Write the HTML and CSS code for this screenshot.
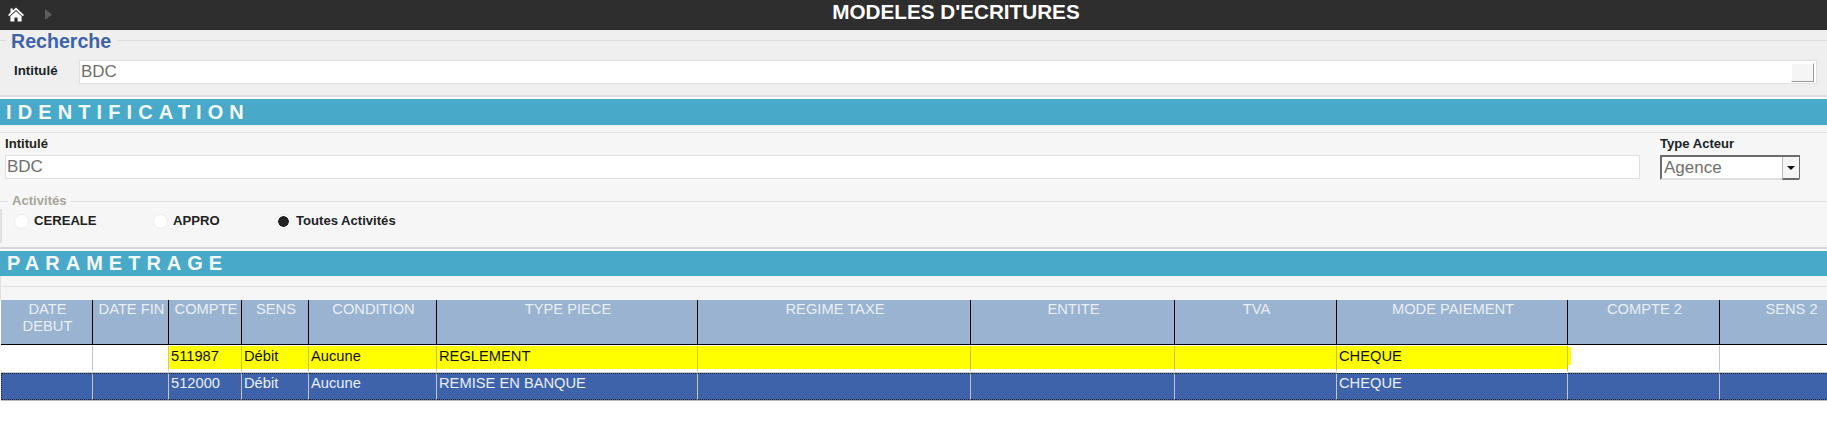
FILE: index.html
```html
<!DOCTYPE html>
<html lang="fr">
<head>
<meta charset="utf-8">
<title>Modeles d'ecritures</title>
<link rel="stylesheet" href="styles.css">
</head>
<body>
<header class="topbar">
  <div class="nav">
    <svg class="home" viewBox="0 0 16 15" width="16" height="15"><path d="M8 0.5 L16 8 L14.7 9.2 L8 3 L1.3 9.2 L0 8 L2.5 5.6 V1.5 H4.7 V3.6 Z" fill="#fff"/><path d="M8 4.2 L13.6 9.3 V14.5 H9.6 V10.5 H6.4 V14.5 H2.4 V9.3 Z" fill="#fff"/></svg>
    <svg class="arrow" viewBox="0 0 7 11" width="7" height="11"><path d="M0 0 L7 5.5 L0 11 Z" fill="#5c5c5c"/></svg>
  </div>
  <h1 class="title">MODELES D'ECRITURES</h1>
</header>

<section class="search">
  <div class="search-legend"><span class="search-legend-text">Recherche</span></div>
  <div class="search-row">
    <label class="search-label">Intitulé</label>
    <div class="field search-field"><span>BDC</span><span class="field-btn"></span></div>
  </div>
</section>

<h2 class="band">IDENTIFICATION</h2>
<section class="ident">
  <div class="ident-row">
    <div class="ident-main">
      <label class="lbl">Intitulé</label>
      <div class="field ident-field"><span>BDC</span></div>
    </div>
    <div class="ident-side">
      <label class="lbl">Type Acteur</label>
      <div class="select"><span>Agence</span><span class="select-btn"><svg viewBox="0 0 8 4" width="8" height="4"><path d="M0 0 H8 L4 4 Z" fill="#111"/></svg></span></div>
    </div>
  </div>
  <div class="act">
    <div class="act-legend"><span class="act-legend-text">Activités</span></div>
    <div class="radios">
      <span class="radio r1"><i class="dot"></i>CEREALE</span>
      <span class="radio r2"><i class="dot"></i>APPRO</span>
      <span class="radio"><i class="dot on"></i>Toutes Activités</span>
    </div>
  </div>
</section>

<h2 class="band band2">PARAMETRAGE</h2>
<section class="param">
  <div class="param-gap"></div>
  <table class="grid">
    <colgroup>
      <col class="c1"><col class="c2"><col class="c3"><col class="c4"><col class="c5"><col class="c6"><col class="c7"><col class="c8"><col class="c9"><col class="c10"><col class="c11"><col class="c12">
    </colgroup>
    <thead>
      <tr><th>DATE DEBUT</th><th>DATE FIN</th><th>COMPTE</th><th>SENS</th><th>CONDITION</th><th>TYPE PIECE</th><th>REGIME TAXE</th><th>ENTITE</th><th>TVA</th><th>MODE PAIEMENT</th><th>COMPTE 2</th><th>SENS 2</th></tr>
    </thead>
    <tbody>
      <tr class="row-y"><td></td><td></td><td class="y">511987</td><td class="y">Débit</td><td class="y">Aucune</td><td class="y">REGLEMENT</td><td class="y"></td><td class="y"></td><td class="y"></td><td class="y y-end">CHEQUE</td><td></td><td></td></tr>
      <tr class="row-b"><td></td><td></td><td>512000</td><td>Débit</td><td>Aucune</td><td>REMISE EN BANQUE</td><td></td><td></td><td></td><td>CHEQUE</td><td></td><td></td></tr>
    </tbody>
  </table>
</section>
</body>
</html>
```
FILE: styles.css
```css
* { box-sizing: border-box; }
html, body { margin: 0; padding: 0; }
body {
  width: 1827px;
  height: 436px;
  overflow: hidden;
  background: #fff;
  font-family: "Liberation Sans", Arial, sans-serif;
  color: #222;
}
.topbar {
  height: 30px;
  background: #2e2e2e;
  display: flex;
  align-items: center;
  justify-content: center;
  position: relative;
}
.nav {
  position: absolute;
  left: 8px;
  top: 7px;
  display: flex;
  align-items: center;
  gap: 21px;
}
.home { display: block; }
.arrow { display: block; }
.title {
  margin: 0 0 6px 85px;
  font-size: 20.7px;
  line-height: 24px;
  font-weight: 700;
  color: #fff;
}
.search {
  height: 67px;
  background: #efefef;
  border-bottom: 2px solid #dedede;
}
.search-legend {
  height: 24px;
  padding: 0 0 0 6px;
  position: relative;
  display: flex;
}
.search-legend::before {
  content: "";
  position: absolute;
  left: 0;
  right: 0;
  top: 10px;
  height: 1px;
  background: #dcdcdc;
}
.search-legend-text {
  position: relative;
  background: #efefef;
  padding: 0 6px 0 5px;
  font-size: 19.6px;
  line-height: 23px;
  font-weight: 700;
  color: #3f63aa;
}
.search-row {
  display: flex;
  align-items: flex-start;
  padding: 6px 10px 0 14px;
}
.search-label {
  width: 65px;
  font-size: 13.3px;
  line-height: 16px;
  font-weight: 700;
  padding-top: 3px;
}
.field {
  background: #fff;
  border: 1px solid #e0e0e0;
  height: 24px;
  font-size: 17px;
  line-height: 20px;
  color: #6f6f6f;
  padding: 1px 1px;
}
.search-field {
  flex: 1;
  display: flex;
  justify-content: space-between;
}
.field-btn {
  width: 23px;
  height: 19px;
  margin: 1px 1px 0 0;
  background: #f5f5f5;
  border-right: 1px solid #9a9a9a;
  border-bottom: 1px solid #9a9a9a;
  border-top: 1px solid #fff;
  border-left: 1px solid #fff;
}
.band {
  margin: 2px 0 0;
  height: 26px;
  background: #48a9c9;
  color: #f4f9fb;
  font-size: 20px;
  line-height: 26px;
  font-weight: 700;
  letter-spacing: 6.1px;
  padding-left: 6px;
}
.band2 { margin-top: 2px; height: 25px; line-height: 25px; letter-spacing: 6px; padding-left: 7px; }
.ident {
  height: 124px;
  background: #f6f6f6;
  padding-top: 7px;
  border-bottom: 2px solid #d8d8d8;
}
.ident-row {
  display: flex;
  border-top: 1px solid #e0e0e0;
  padding: 3px 0 0 5px;
}
.ident-main { width: 1655px; padding-right: 20px; }
.ident-side { width: 140px; }
.lbl {
  display: block;
  font-size: 13.1px;
  line-height: 16px;
  font-weight: 700;
  margin-bottom: 3px;
}
.ident-field { height: 24px; }
.select {
  height: 25px;
  border: 2px solid #6c6c6c;
  border-right-width: 1px;
  border-bottom-color: #e0e0e0;
  border-right-color: #6c6c6c;
  background: #fff;
  display: flex;
  justify-content: space-between;
  font-size: 17px;
  line-height: 21px;
  color: #6f6f6f;
  padding-left: 2px;
  position: relative;
}
.select-btn {
  width: 17px;
  height: 23px;
  background: #f5f5f5;
  border-left: 1px solid #bbb;
  border-bottom: 2px solid #6c6c6c;
  display: flex;
  align-items: center;
  justify-content: center;
}
.act { margin-top: 13px; }
.act-legend {
  height: 16px;
  padding-left: 8px;
  display: flex;
  position: relative;
}
.act-legend::before {
  content: "";
  position: absolute;
  left: 0;
  right: 0;
  top: 8px;
  height: 1px;
  background: #e0e0e0;
}
.act-legend-text {
  position: relative;
  background: #f6f6f6;
  padding: 0 4px;
  font-size: 13.1px;
  line-height: 16px;
  font-weight: 700;
  color: #a8a49b;
}
.radios {
  display: flex;
  padding: 4px 0 0 12px;
  border-left: 2px solid #e0e0e0;
  height: 34px;
  font-size: 13.1px;
  font-weight: 700;
  line-height: 16px;
}
.radio { display: flex; align-items: center; height: 16px; gap: 5px; }
.r1 { width: 139px; }
.r2 { width: 123px; }
.dot {
  width: 15px;
  height: 15px;
  border-radius: 50%;
  background: #fff;
  border: 1px solid #ececec;
  display: block;
}
.dot.on {
  background: radial-gradient(circle, #222 0, #222 5px, #fff 5.6px);
}
.param { background: #fff; }
.param-gap {
  height: 24px;
  background: linear-gradient(#f6f6f6 0, #f6f6f6 10px, #e0e0e0 10px, #e0e0e0 11px, #f6f6f6 11px);
  border-left: 1px solid #e0e0e0;
}
.grid {
  table-layout: fixed;
  border-collapse: separate;
  border-spacing: 0;
  width: 1861px;
  margin-left: 1px;
  font-size: 14.7px;
  line-height: 17px;
}
.c1 { width: 92px; }
.c2 { width: 76px; }
.c3 { width: 73px; }
.c4 { width: 67px; }
.c5 { width: 128px; }
.c6 { width: 261px; }
.c7 { width: 273px; }
.c8 { width: 204px; }
.c9 { width: 162px; }
.c10 { width: 231px; }
.c11 { width: 152px; }
.c12 { width: 142px; }
.grid th {
  height: 45px;
  background: #99b3d0;
  color: #e9eff6;
  font-weight: 400;
  vertical-align: top;
  padding: 1px 1px 0 3px;
  border-right: 1px solid #000;
  border-bottom: 1px solid #000;
  text-align: center;
}
.grid td {
  padding: 0 2px;
  border-right: 1px solid #c4c4c4;
  white-space: nowrap;
}
.row-y td {
  height: 28px;
  color: #111;
  border-bottom: 4px solid #fff;
  padding-bottom: 3px;
  vertical-align: middle;
  border-top: 1px solid #fff;
}
.row-y td.y {
  background: #ff0;
  border-right-color: #c8c800;
  background-clip: padding-box;
}
.row-y td.y-end { position: relative; }
.row-y td.y-end::after {
  content: "";
  position: absolute;
  top: 1px;
  bottom: 4px;
  right: -4px;
  width: 3px;
  background: #ff0;
}
.row-b td {
  height: 27px;
  background: #3f63aa;
  color: #e9eff9;
  border-top: 1px dotted #222;
  border-bottom: 1px dotted #222;
  box-shadow: 0 1px 0 #bbb, 0 -1px 0 #ccc;
  padding-bottom: 7px;
  vertical-align: middle;
}
.row-b td:first-child { border-left: 1px dotted #222; }
```
